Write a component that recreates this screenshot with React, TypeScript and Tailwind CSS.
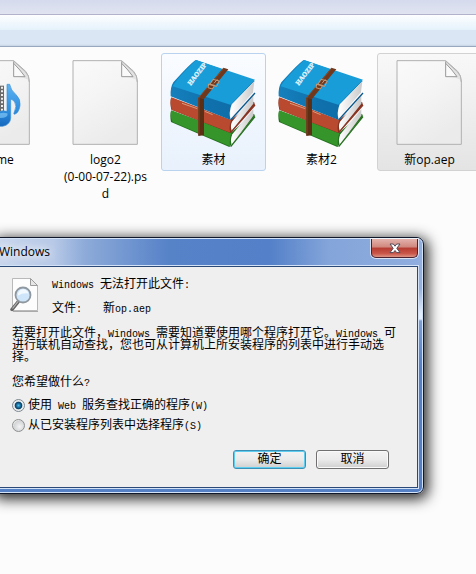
import { useState, type ReactNode } from 'react';
import clsx from 'clsx';

function PageShape() {
  return (
    <>
      <path
        d="M218 32H364L400 64Q411 76 411 96V283H218Z"
        fill="url(#paper)"
        stroke="#b0b0b0"
        strokeWidth="3"
        strokeLinejoin="round"
      />
      <path d="M364 33L402 68Q410 78 410 90Q394 80 364 80Z" fill="#e2e2e2" />
      <path d="M364 34V80H398Q384 60 364 40" fill="#fafafa" stroke="#999" strokeWidth="3" />
      <path d="M364 33L400 66Q411 77 411 96" fill="none" stroke="#b2b2b2" strokeWidth="3" />
    </>
  );
}

function PaperGradient() {
  return (
    <linearGradient id="paper" x1="0" y1="0" x2="0.5" y2="1">
      <stop offset="0" stopColor="#fafafa" />
      <stop offset="0.45" stopColor="#f5f5f5" />
      <stop offset="1" stopColor="#ebebeb" />
    </linearGradient>
  );
}

function PageIcon() {
  return (
    <svg viewBox="185 24 264 270" className="h-[90px] w-[88px]" aria-hidden="true">
      <defs>
        <PaperGradient />
      </defs>
      <PageShape />
    </svg>
  );
}

function MediaIcon() {
  return (
    <svg viewBox="0 24 150 270" className="h-[90px] w-[50px]" aria-hidden="true">
      <defs>
        <PaperGradient />
        <linearGradient id="note" x1="0" y1="0" x2="0" y2="1">
          <stop offset="0" stopColor="#5cb3f0" />
          <stop offset="0.6" stopColor="#2f8fe0" />
          <stop offset="1" stopColor="#1668bd" />
        </linearGradient>
      </defs>
      <g transform="translate(-323 0)">
        <PageShape />
      </g>
      <rect x="-4" y="107" width="16" height="78" fill="#6a6a6a" />
      <path d="M6 110V184" stroke="#f0f0f0" strokeWidth="6" strokeDasharray="6 5" />
      <path
        d="M21 103H29Q32 121 48 134Q63 148 60 167Q56 190 43 193Q40 191 43 186Q52 168 44 156Q39 149 32 147V204Q31 224 8 229H-4V186Q8 180 21 184Z"
        fill="url(#note)"
        stroke="#3b8fd4"
        strokeWidth="2"
      />
      <path d="M-2 190Q10 186 22 190Q25 200 10 203L-2 204Z" fill="#8ed0fa" opacity=".6" />
    </svg>
  );
}

function BooksIcon() {
  return (
    <svg viewBox="44 39 264 270" className="h-[90px] w-[88px]" aria-hidden="true">
      <defs>
        <linearGradient id="blueSpine" x1="0" x2="1">
          <stop offset="0" stopColor="#1580bd" />
          <stop offset="0.5" stopColor="#0f70ab" />
          <stop offset="1" stopColor="#0f6ca6" />
        </linearGradient>
        <linearGradient id="pages" x1="0" x2="1">
          <stop offset="0" stopColor="#ffffff" />
          <stop offset="1" stopColor="#c9c9c9" />
        </linearGradient>
      </defs>

      {/* green */}
      <path d="M47 197Q43 212 47 231L222 306L299 214L296 206L228 262Z" fill="#24701e" />
      <path d="M48 196L228 264Q221 282 224 304L52 231Q43 213 48 196Z" fill="#35952a" />
      <path d="M231 268L294 192V212L229 300Q224 284 231 268Z" fill="url(#pages)" />
      <path d="M226 305L299 215" stroke="#236d1c" strokeWidth="4" />

      {/* red */}
      <path d="M47 158Q43 176 48 194L225 264L299 180L296 170L226 226Z" fill="#853220" />
      <path d="M48 157L228 225Q219 245 225 263L50 194Q43 176 48 157Z" fill="#b94a2f" />
      <path d="M80 175L126 191M148 199L172 209" stroke="#d99a78" strokeWidth="3" />
      <path d="M230 230L294 152V176L229 257Q224 243 230 230Z" fill="url(#pages)" />
      <path d="M226 263L299 180" stroke="#8a3422" strokeWidth="4" />

      {/* blue */}
      <path
        d="M122 45Q108 52 54 112Q44 128 46 154L226 225Q219 204 229 178L298 108Z"
        fill="url(#blueSpine)"
      />
      <path d="M122 45L299 104L229 176Q225 180 220 178L52 124Q62 103 122 45Z" fill="#199dd8" />
      <path d="M231 180L297 108L293 142L229 216Q223 198 231 180Z" fill="url(#pages)" />
      <path d="M226 225L299 144" stroke="#0c578b" strokeWidth="4" />

      {/* strap */}
      <path d="M204 68L219 73L146 162V270L129 272V158Z" fill="#70391d" />
      <path d="M129 158L146 163V270L129 272Z" fill="#5c2e14" />
      <path d="M205 70L131 157V268" fill="none" stroke="#925632" strokeWidth="2" />
      <g fill="none" stroke="#c69a77" strokeWidth="3">
        <path d="M173 103L192 108L184 124L163 119Z" />
        <path d="M160 117L178 121L171 132L158 128Z" />
        <path d="M176 115L186 103" />
      </g>
      <text
        transform="translate(106 122) rotate(-52)"
        fontFamily="'Liberation Serif', serif"
        fontWeight="700"
        fontSize="20"
        fill="#e2f4fd"
        stroke="#e2f4fd"
      >
        HAOZIP
      </text>
    </svg>
  );
}

function SearchFileIcon() {
  return (
    <svg viewBox="0 0 32 38" className="h-[38px] w-8 shrink-0" aria-hidden="true">
      <path d="M2.500 2.500H20.500L27.500 9.500V34.500H2.500Z" fill="#fdfdfd" stroke="#b9b9b9" />
      <path d="M20.500 2.500V9.500H27.500Z" fill="#e6e6e6" stroke="#9c9c9c" />
      <path d="M3 35.500H28" stroke="#aaa" />
      <path d="M8 26L2 33.500" stroke="#666" strokeWidth="3.500" strokeLinecap="round" />
      <path d="M8 25.500L2.500 32.500" stroke="#b5b5b5" strokeWidth="1.200" />
      <circle cx="13" cy="19" r="7.500" fill="#cfe5f9" stroke="#8f979f" strokeWidth="1.800" />
      <path d="M8 17.500Q10 12.500 15 13.500Q18 14.500 18.500 17.500Q13 16.500 8 19.500Z" fill="#f2faff" />
    </svg>
  );
}

type FileTileProps = {
  name: ReactNode;
  icon: ReactNode;
  state?: 'hover' | 'selected';
};

function FileTile({ name, icon, state }: FileTileProps) {
  return (
    <li
      className={clsx(
        'flex w-[105px] shrink-0 flex-col items-center gap-[3px] rounded-[3px] border pt-1 pb-[2px]',
        !state && 'border-transparent',
        state === 'hover' && 'border-[#b9d3ee] bg-linear-to-b from-[#fafcff] to-[#e8f1fc]',
        state === 'selected' && 'border-[#d2d2d2] bg-linear-to-b from-[#f8f8f8] to-[#e4e4e4]',
      )}
    >
      {icon}
      <span className="text-center">{name}</span>
    </li>
  );
}

// Latin runs are set smaller so that two of them take one CJK cell.
function En({ children }: { children: ReactNode }) {
  return <span className="text-[10px] leading-none whitespace-pre">{children}</span>;
}

const radioClass =
  'size-[13px] shrink-0 appearance-none rounded-full border border-[#8e8f8f] bg-[radial-gradient(circle_at_60%_60%,#f4f4f4_0%,#d2d4d6_60%,#f2f2f2_75%)] checked:border-[#7d8890] checked:bg-[radial-gradient(circle_at_50%_50%,#4cc0ec_0%,#14608f_30%,#0c3d5e_44%,#dfe5e8_54%,#f4f4f4_75%)]';

const buttonClass =
  'h-[19px] w-[73px] rounded-[3px] border bg-linear-to-b from-[#f3f3f3] from-0% via-[#ebebeb] via-50% to-[#cfcfcf] text-center leading-4';

function OpenWithDialog() {
  const [choice, setChoice] = useState('web');

  return (
    <div
      role="dialog"
      aria-labelledby="dialog-title"
      className="mr-[52px] -ml-[7px] rounded-[7px] border border-[#10192b] bg-[linear-gradient(to_bottom,#8fadde_0,#94b0de_50px,#e4eefa_76px,#e4eefa_81px,#7c9ed4_83px,#5580c6_130px)] px-[5px] pb-[5px] shadow-[inset_0_0_0_1px_#d3e2f6,2px_3px_14px_2px_rgba(0,0,0,0.85)]"
    >
      <header className="mt-px flex h-[27px] items-start justify-between bg-[linear-gradient(to_right,#c9d6ec_0,#b7c9e7_55px,#8eabd9_85px,#5682c8_170px,#5380c8_270px,#84a5da_330px,#8fadde_100%)]">
        <h1
          id="dialog-title"
          className="font-['Open_Sans','Noto_Sans_CJK_SC',sans-serif] text-xs leading-[26px] [text-shadow:0_0_8px_#fff,0_0_10px_#fff]"
        >
          Windows
        </h1>
        <button
          type="button"
          aria-label="关闭"
          className="flex h-[19px] w-[47px] items-center justify-center rounded-b-[5px] border border-t-0 border-[#4d2230] bg-[linear-gradient(to_bottom,#e3b3ac_0%,#d0877d_45%,#b53c31_50%,#c95548_80%,#dd9384_100%)] shadow-[0_0_0_1px_rgba(255,255,255,0.65)]"
        >
          <svg viewBox="0 0 12 11" className="h-[11px] w-3" aria-hidden="true">
            <path
              d="M1 1H4.300L6 3.200L7.700 1H11L7.800 5.300L11 9.600H7.700L6 7.500L4.300 9.600H1L4.200 5.300Z"
              fill="#fff"
              stroke="#534a58"
            />
          </svg>
        </button>
      </header>

      <div className="border border-[#2c4a78] bg-[#efefef] px-3 pt-[9px] pb-[18px] font-['Liberation_Mono','Noto_Sans_CJK_SC',monospace] text-xs leading-3 shadow-[0_0_0_1px_#d3e2f6]">
        <div className="-ml-[2px] flex gap-[10px]">
          <SearchFileIcon />
          <div className="flex flex-col gap-3 pt-[3px]">
            <p>
              <En>Windows </En>无法打开此文件<En>:</En>
            </p>
            <p className="flex">
              <span className="w-[51px]">
                文件<En>:</En>
              </span>
              <span>
                新<En>op.aep</En>
              </span>
            </p>
          </div>
        </div>

        <p className="mt-[13px] whitespace-nowrap">
          若要打开此文件，<En>Windows </En>需要知道要使用哪个程序打开它。<En>Windows </En>可
          <br />
          进行联机自动查找，您也可从计算机上所安装程序的列表中进行手动选
          <br />
          择。
        </p>

        <fieldset className="mt-[13px]">
          <legend>
            您希望做什么<En>?</En>
          </legend>
          <div className="flex flex-col gap-[7px] pt-[10px]">
            <label className="flex items-center gap-[3px]">
              <input
                type="radio"
                name="method"
                className={radioClass}
                checked={choice === 'web'}
                onChange={() => setChoice('web')}
              />
              <span>
                使用<En> Web </En>服务查找正确的程序<En>(W)</En>
              </span>
            </label>
            <label className="flex items-center gap-[3px]">
              <input
                type="radio"
                name="method"
                className={radioClass}
                checked={choice === 'list'}
                onChange={() => setChoice('list')}
              />
              <span>
                从已安装程序列表中选择程序<En>(S)</En>
              </span>
            </label>
          </div>
        </fieldset>

        <div className="mt-[18px] flex justify-end gap-[10px] pr-4">
          <button type="button" className={clsx(buttonClass, 'border-[#3c8fb5] shadow-[inset_0_0_0_1px_#5fcdf0]')}>
            确定
          </button>
          <button type="button" className={clsx(buttonClass, 'border-[#707070] shadow-[inset_0_0_0_1px_#fafafa]')}>
            取消
          </button>
        </div>
      </div>
    </div>
  );
}

export default function App() {
  return (
    <main className="min-h-screen overflow-hidden bg-[#fcfcfc] text-black">
      <div className="h-[15px] border-b border-[#b0b3cb] bg-linear-to-b from-[#d5daec] to-[#e0e4f1]" />
      <div className="h-8 border-b border-[#98a9bf] bg-[linear-gradient(to_bottom,#fdfeff_0,#e5f2fb_15px,#dae6f4_15px,#dae6f4_29px,#c6d3e2_31px)]" />

      <ul className="flex items-start gap-[3px] pt-[6px] font-['Open_Sans','Noto_Sans_CJK_SC',sans-serif] text-xs leading-[17px]">
        <li className="flex w-[50px] shrink-0 flex-col gap-[3px] pt-[5px]">
          <MediaIcon />
          <span className="-ml-1">me</span>
        </li>
        <FileTile
          icon={<PageIcon />}
          name={
            <>
              logo2
              <br />
              (0-00-07-22).ps
              <br />d
            </>
          }
        />
        <FileTile icon={<BooksIcon />} name="素材" state="hover" />
        <FileTile icon={<BooksIcon />} name="素材2" />
        <FileTile icon={<PageIcon />} name="新op.aep" state="selected" />
      </ul>

      <div className="pt-8">
        <OpenWithDialog />
      </div>
    </main>
  );
}
